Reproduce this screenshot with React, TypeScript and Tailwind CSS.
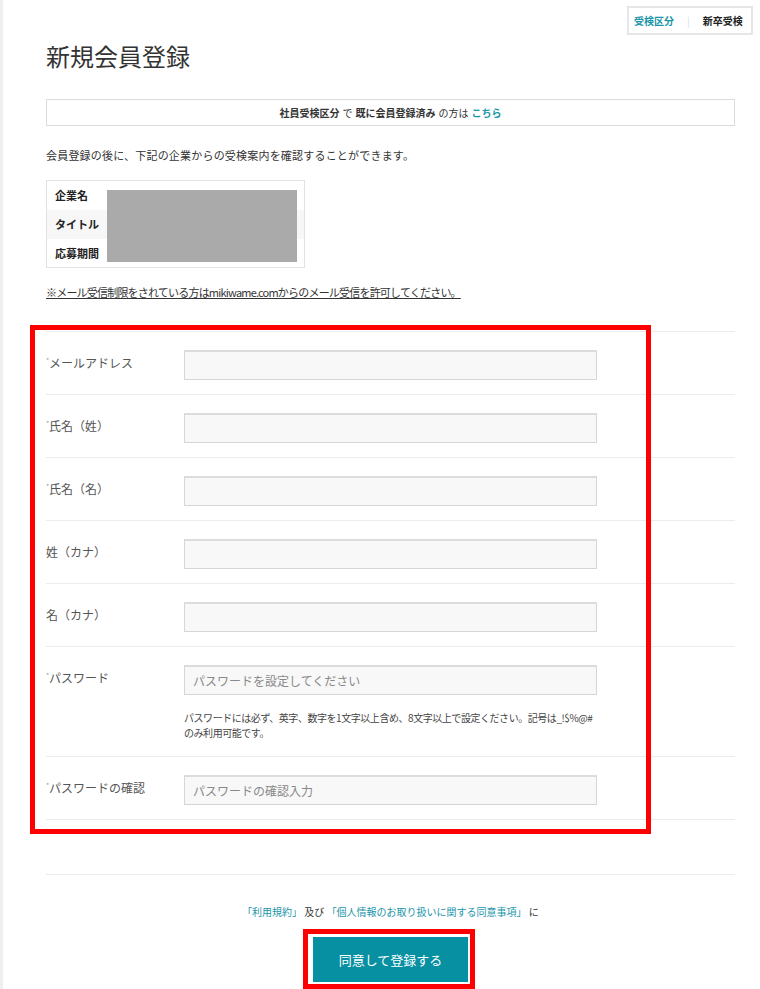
import React from "react";

const jp = { fontFamily: '"Noto Sans CJK JP", "Noto Sans", sans-serif' };

function Row({
  label,
  star = true,
  placeholder,
  helper,
}: {
  label: string;
  star?: boolean;
  placeholder?: string;
  helper?: React.ReactNode;
}) {
  return (
    <div className="flex border-t border-[#ececec] pt-[18px] pb-[14px]">
      <div className="w-[138px] pt-[6px] text-[12px] leading-[14px] text-[#555] flex items-start">
        {star && <span className="text-[7px] leading-[8px] text-[#999] w-[4px] overflow-hidden -mr-[1px]">*</span>}
        <span>{label}</span>
      </div>
      <div className="w-[413px]">
        <div className="h-[30px] border border-[#d6d6d6] border-t-2 border-t-[#dcdcdc] bg-[#f8f8f8] px-[8px] flex items-center text-[12px] text-[#888]">
          {placeholder}
        </div>
        {helper && (
          <div className="mt-[15px] mb-[2px] text-[10px] leading-[15px] text-[#444] whitespace-nowrap tracking-[-0.45px]">{helper}</div>
        )}
      </div>
    </div>
  );
}

export default function App() {
  return (
    <div style={jp} className="min-h-[989px] bg-white border-l-[3px] border-[#efefef] text-[#333]">
      <div className="flex justify-end pt-[6px] pr-[7px]">
        <div className="h-[29px] w-[126px] border-2 border-[#e6e6e6] flex items-center text-[10px] font-bold">
          <span className="ml-[5px] text-[#1a95aa]">受検区分</span>
          <span className="mx-[13px] text-[#ddd] font-normal">|</span>
          <span className="text-[#222]">新卒受検</span>
        </div>
      </div>
      <div className="ml-[43px] mr-[25px]">
        <h1 className="mt-[5px] h-[32px] text-[24px] leading-[32px] font-normal text-[#333]">新規会員登録</h1>

        <div className="mt-[27px] h-[27px] border border-[#dcdcdc] flex items-center justify-center text-[10px] text-[#333]">
          <span className="font-bold">社員受検区分</span>
          <span className="mx-[3px]">で</span>
          <span className="font-bold">既に会員登録済み</span>
          <span className="mx-[3px]">の方は</span>
          <span className="font-bold text-[#1a95aa]">こちら</span>
        </div>

        <p className="mt-[21px] text-[11px] leading-[16px] text-[#333] tracking-[0.2px]">
          会員登録の後に、下記の企業からの受検案内を確認することができます。
        </p>

        <div className="relative mt-[17px] w-[259px] border border-[#e2e2e2] text-[11px] font-bold text-[#222]">
          <div className="h-[29px] flex items-center pl-[8px]">企業名</div>
          <div className="h-[29px] flex items-center pl-[8px] bg-[#f7f7f7]">タイトル</div>
          <div className="h-[28px] flex items-center pl-[8px]">応募期間</div>
          <div className="absolute left-[60px] top-[9px] w-[190px] h-[72px] bg-[#aaaaaa]" />
        </div>

        <p className="mt-[16px] text-[11px] leading-[16px] text-[#333] underline tracking-[-0.8px] whitespace-nowrap">
          ※メール受信制限をされている方はmikiwame.comからのメール受信を許可してください。
        </p>

        <div className="relative mt-[31px]">
          <Row label="メールアドレス" />
          <Row label="氏名（姓）" />
          <Row label="氏名（名）" />
          <Row label="姓（カナ）" star={false} />
          <Row label="名（カナ）" star={false} />
          <Row
            label="パスワード"
            placeholder="パスワードを設定してください"
            helper={
              <>
                パスワードには必ず、英字、数字を1文字以上含め、8文字以上で設定ください。記号は_!$%@#
                <br />
                のみ利用可能です。
              </>
            }
          />
          <Row label="パスワードの確認" placeholder="パスワードの確認入力" />
          <div className="border-t border-[#ececec]" />
          <div className="absolute left-[-16px] top-[-6px] w-[621px] bottom-[-14px] border-[5px] border-[#ff0000] pointer-events-none" />
        </div>

        <div className="mt-[54px] border-t border-[#ececec]" />

        <p className="mt-[29px] text-center text-[10px] leading-[15px] text-[#333]">
          <span className="text-[#1a95aa]">「利用規約」</span> 及び{" "}
          <span className="text-[#1a95aa]">「個人情報のお取り扱いに関する同意事項」</span> に
        </p>

        <div className="relative mx-auto mt-[18px] w-[155px]">
          <span className="absolute top-[-8px] left-[-10px] right-[-7px] bottom-[-7px] border-[5px] border-[#ff0000] pointer-events-none" />
          <button className="w-[155px] h-[45px] bg-[#078fa2] text-white text-[13px]">同意して登録する</button>
        </div>
      </div>
    </div>
  );
}
